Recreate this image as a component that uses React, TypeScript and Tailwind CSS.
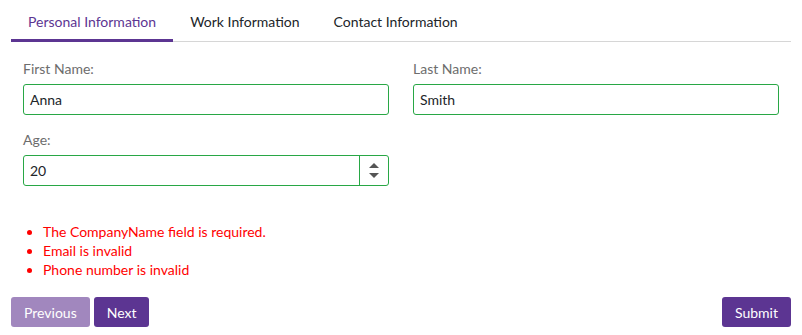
import { useState } from "react";

const TABS = ["Personal Information", "Work Information", "Contact Information"];
const ERRORS = [
  "The CompanyName field is required.",
  "Email is invalid",
  "Phone number is invalid",
];

function Field({ label, value, spinner }: { label: string; value: string; spinner?: boolean }) {
  return (
    <div>
      <label className="block text-[14px] leading-[20px] text-[#6d6d6d]">{label}</label>
      <div className="mt-[5px] flex h-[31px] items-stretch rounded-[3px] border border-[#28a745] bg-white">
        <span className="flex flex-1 items-center px-[6px] text-[14px] text-[#212529]">{value}</span>
        {spinner && (
          <span className="flex w-[29px] flex-col items-center justify-center gap-[5px] border-l border-[#28a745]">
            <span className="h-0 w-0 border-x-[5px] border-b-[5px] border-x-transparent border-b-[#555]" />
            <span className="h-0 w-0 border-x-[5px] border-t-[5px] border-x-transparent border-t-[#555]" />
          </span>
        )}
      </div>
    </div>
  );
}

export default function App() {
  const [active, setActive] = useState(0);
  return (
    <div className="min-h-[335px] bg-white px-[11px] font-['Lato',sans-serif]">
      <div className="flex border-b border-[#d6d6d6]">
        {TABS.map((t, i) => (
          <button
            key={t}
            onClick={() => setActive(i)}
            className={
              i === active
                ? "-mb-px h-[42px] border-b-[3px] border-[#5c3592] px-[17px] pt-[4px] text-[14px] text-[#5c3592]"
                : "-mb-px h-[42px] border-b-[3px] border-transparent px-[17px] pt-[4px] text-[14px] text-[#212529]"
            }
          >
            {t}
          </button>
        ))}
      </div>

      <div className="px-[12px] pt-[17px]">
        <div className="grid grid-cols-2 gap-x-[24px] gap-y-[15px]">
          <Field label="First Name:" value="Anna" />
          <Field label="Last Name:" value="Smith" />
          <Field label="Age:" value="20" spinner />
        </div>
      </div>

      <ul className="mt-[36px] list-disc pl-[32px] text-[14px] leading-[19px] text-[#ff0000] marker:text-[#ff0000]">
        {ERRORS.map((e) => (
          <li key={e}>{e}</li>
        ))}
      </ul>

      <div className="mt-[18px] flex items-center">
        <button className="h-[30px] rounded-[3px] bg-[#a187be] px-[13px] text-[14px] text-white">Previous</button>
        <button className="ml-[4px] h-[30px] rounded-[3px] bg-[#5c3592] px-[13px] text-[14px] text-white">Next</button>
        <button className="ml-auto h-[30px] rounded-[3px] bg-[#5c3592] px-[13px] text-[14px] text-white">Submit</button>
      </div>
    </div>
  );
}
